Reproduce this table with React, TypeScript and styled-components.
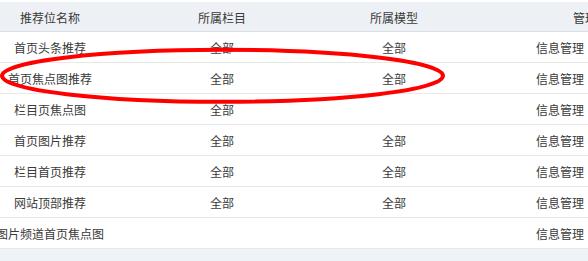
import React, { FunctionComponent } from 'react'
import styled, { createGlobalStyle } from 'styled-components'

const GlobalStyle = createGlobalStyle`
  html, body {
    margin: 0;
    padding: 0;
    background: #fff;
    overflow: hidden;
  }
  body {
    font-family: "Noto Sans CJK SC", "Noto Sans", sans-serif;
    font-size: 12px;
    color: #333;
  }
`

const Page = styled.div`
  position: relative;
  width: 588px;
  height: 261px;
  padding-top: 2px;
  box-sizing: border-box;
  overflow: hidden;
`

const Grid = styled.div`
  width: 750px;
`

const Row = styled.div<{ $head?: boolean }>`
  display: grid;
  grid-template-columns: 100px 244px 100px 306px;
  height: ${(p) => (p.$head ? '30px' : '31px')};
  box-sizing: border-box;
  background: ${(p) => (p.$head ? '#edf1f5' : '#fff')};
  border-bottom: 1px solid ${(p) => (p.$head ? '#d9dee4' : '#e8e8e8')};
`

const Cell = styled.div<{ $head?: boolean }>`
  display: flex;
  align-items: center;
  justify-content: center;
  white-space: nowrap;
  padding-top: ${(p) => (p.$head ? '2px' : '0')};
  color: #3a3a3a;
`

const OpsCell = styled(Cell)<{ $indent: number }>`
  justify-content: flex-start;
  padding-left: ${(p) => p.$indent}px;
`

const Footer = styled.div`
  height: 20px;
  background: #eef3f8;
`

const Mark = styled.svg`
  position: absolute;
  left: 0;
  top: 0;
  pointer-events: none;
`

type Slot = { name: string; column: string; model: string }

const slots: Slot[] = [
  { name: '首页头条推荐', column: '全部', model: '全部' },
  { name: '首页焦点图推荐', column: '全部', model: '全部' },
  { name: '栏目页焦点图', column: '全部', model: '' },
  { name: '首页图片推荐', column: '全部', model: '全部' },
  { name: '栏目首页推荐', column: '全部', model: '全部' },
  { name: '网站顶部推荐', column: '全部', model: '全部' },
  { name: '图片频道首页焦点图', column: '', model: '' },
]

const App: FunctionComponent<{}> = () => {
  return (
    <>
      <GlobalStyle />
      <Page>
        <Grid>
          <Row $head>
            <Cell $head>推荐位名称</Cell>
            <Cell $head>所属栏目</Cell>
            <Cell $head>所属模型</Cell>
            <OpsCell $head $indent={129}>管理操作</OpsCell>
          </Row>
          {slots.map((s) => (
            <Row key={s.name}>
              <Cell>{s.name}</Cell>
              <Cell>{s.column}</Cell>
              <Cell>{s.model}</Cell>
              <OpsCell $indent={92}>信息管理</OpsCell>
            </Row>
          ))}
          <Footer />
        </Grid>
        <Mark width="588" height="261" viewBox="0 0 588 261">
          <ellipse cx="222.5" cy="75.8" rx="220.5" ry="26" fill="none" stroke="#ff0000" strokeWidth="4" />
        </Mark>
      </Page>
    </>
  )
}

export default App
